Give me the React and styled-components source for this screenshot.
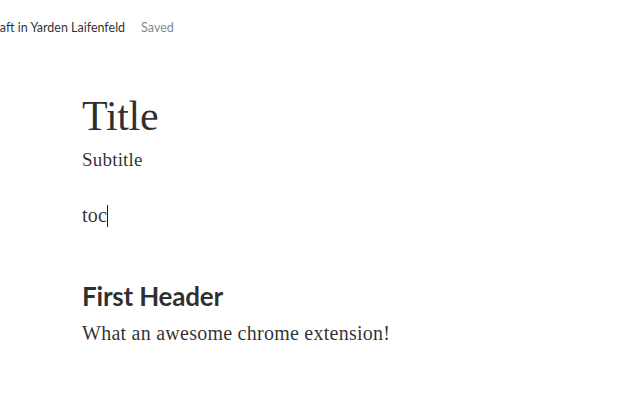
import React from "react";
import styled, { createGlobalStyle } from "styled-components";

const Global = createGlobalStyle`
  html, body { margin: 0; padding: 0; background: #fff; }
  body { width: 640px; height: 400px; overflow: hidden; }
`;

const Page = styled.div`
  width: 640px;
  height: 400px;
  overflow: hidden;
  color: rgba(0, 0, 0, 0.82);
`;

const TopBar = styled.div`
  display: flex;
  align-items: center;
  gap: 16px;
  height: 54px;
  margin-left: -14px;
  font-family: Lato, "Noto Sans", sans-serif;
  font-size: 12.5px;
`;

const Draft = styled.span`
  color: rgba(0, 0, 0, 0.84);
`;

const Status = styled.span`
  color: rgba(0, 0, 0, 0.5);
`;

const Article = styled.div`
  padding: 38px 0 0 82px;
  display: flex;
  flex-direction: column;
`;

const Title = styled.h1`
  margin: 0;
  font-family: "Liberation Serif", serif;
  font-weight: 400;
  font-size: 42px;
  line-height: 48px;
  letter-spacing: -0.3px;
`;

const Subtitle = styled.p`
  margin: 6px 0 0;
  font-family: "Liberation Serif", serif;
  font-size: 19px;
  line-height: 28px;
  letter-spacing: 0.2px;
`;

const Line = styled.p`
  margin: ${(p) => p.$top || 0}px 0 0;
  font-family: "Liberation Serif", serif;
  font-size: 20px;
  line-height: 30px;
  letter-spacing: 0.25px;
`;

const Caret = styled.span`
  display: inline-block;
  width: 1px;
  height: 22px;
  background: #222;
  vertical-align: -5px;
`;

const Header = styled.h2`
  margin: 50px 0 0;
  font-family: Lato, "Noto Sans", sans-serif;
  font-weight: 700;
  font-size: 26px;
  line-height: 32px;
  letter-spacing: -0.2px;
`;

export default function App() {
  return (
    <Page>
      <Global />
      <TopBar>
        <Draft>Draft in Yarden Laifenfeld</Draft>
        <Status>Saved</Status>
      </TopBar>
      <Article>
        <Title>Title</Title>
        <Subtitle>Subtitle</Subtitle>
        <Line $top={26}>
          toc<Caret />
        </Line>
        <Header>First Header</Header>
        <Line $top={6}>What an awesome chrome extension!</Line>
      </Article>
    </Page>
  );
}
